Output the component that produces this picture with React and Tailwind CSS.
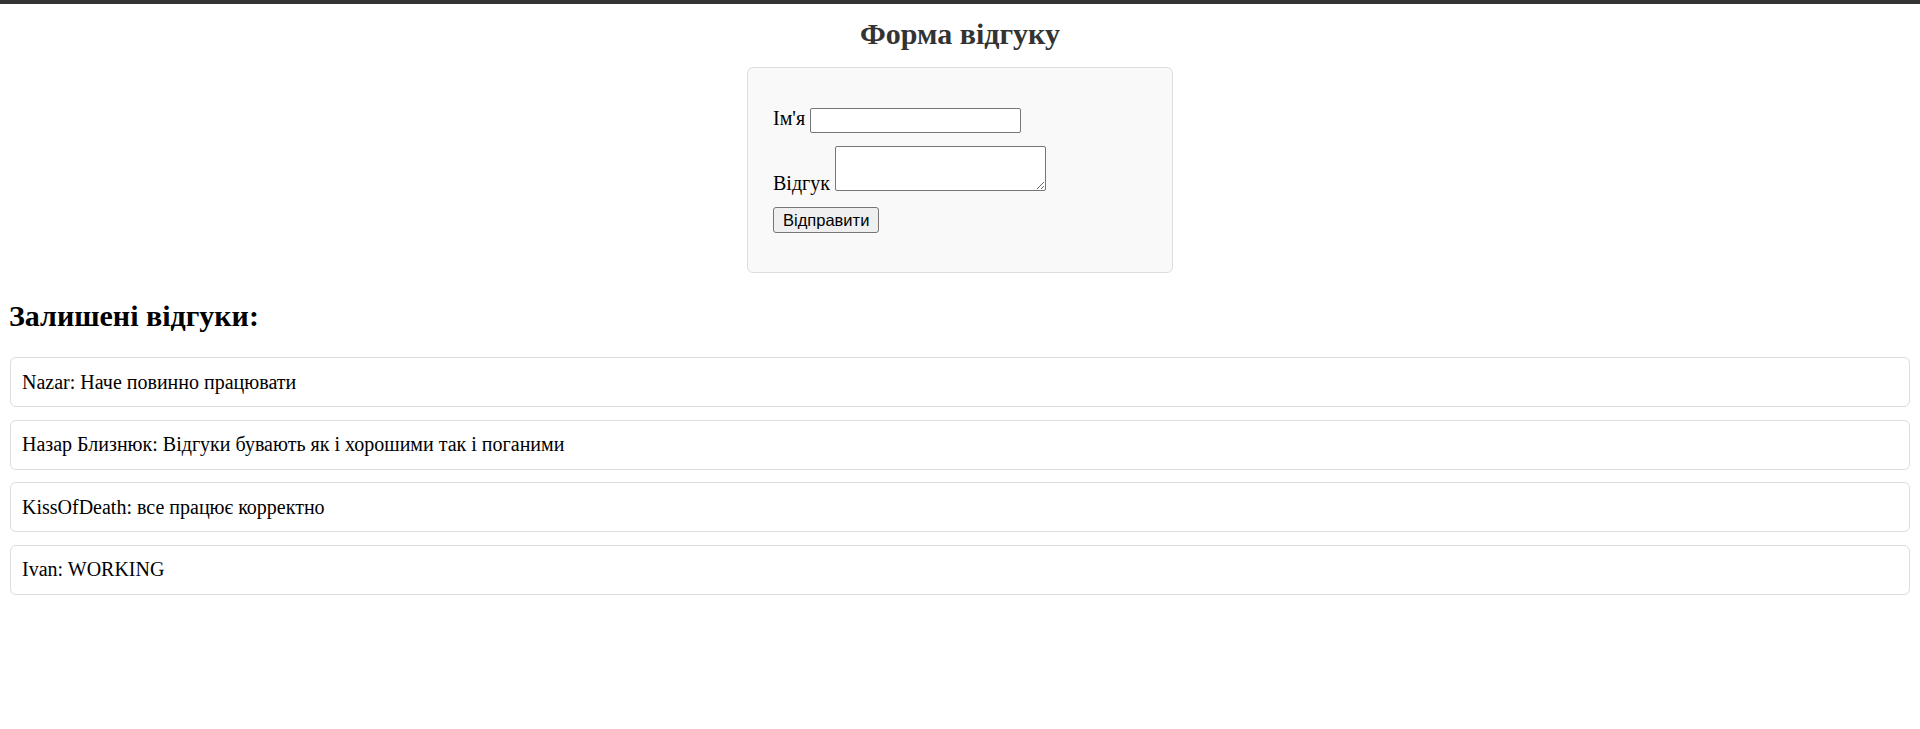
const reviews = [
	{ name: "Nazar", text: "Наче повинно працювати" },
	{ name: "Назар Близнюк", text: "Відгуки бувають як і хорошими так і поганими" },
	{ name: "KissOfDeath", text: "все працює корректно" },
	{ name: "Ivan", text: "WORKING" }
];

export default function App() {
	return (
		<div className="min-h-screen bg-white text-black font-['Liberation_Serif',serif]">
			<div className="h-[4px] bg-[#333]"></div>

			<h1 className="mt-[12px] mb-[16px] text-center text-[30px] leading-[35px] font-bold text-[#333]">Форма відгуку</h1>

			{/* FORM */}
			<form
				className="w-[426px] mx-auto bg-[#f9f9f9] border border-[#ddd] rounded-[6px] pl-[25px] pt-[39px] pb-[39px]"
				onSubmit={(e) => e.preventDefault()}
			>
				<div className="flex items-end gap-[5px]">
					<label className="text-[20px] leading-[23px] mb-[3px]">Ім'я</label>
					<input
						type="text"
						className="w-[211px] h-[25px] bg-white border border-[#767676] rounded-[2px] px-1 text-[16px] font-['Liberation_Sans',sans-serif] outline-none"
					/>
				</div>
				<div className="flex items-end gap-[5px] mt-[13px]">
					<label className="text-[20px] leading-[23px] mb-[-4px]">Відгук</label>
					<textarea className="w-[211px] h-[45px] bg-white border border-[#767676] rounded-[2px] px-1 text-[16px] font-['Liberation_Sans',sans-serif] outline-none"></textarea>
				</div>
				<button
					type="submit"
					className="mt-[16px] h-[26px] px-[9px] bg-[#efefef] border border-[#767676] rounded-[3px] text-[16.5px] leading-none text-black font-['Liberation_Sans',sans-serif]"
				>
					Відправити
				</button>
			</form>

			{/* REVIEWS */}
			<h2 className="mt-[25px] ml-[9px] text-[30px] leading-[35px] font-bold">Залишені відгуки:</h2>
			<div className="mt-[24px] mx-[10px] flex flex-col gap-[12.5px]">
				{reviews.map((r, i) => (
					<div
						key={i}
						className="h-[50px] flex items-center pl-[11px] border border-[#ddd] rounded-[6px] bg-white text-[20px] leading-[23px]"
					>
						{r.name}: {r.text}
					</div>
				))}
			</div>
		</div>
	);
}
